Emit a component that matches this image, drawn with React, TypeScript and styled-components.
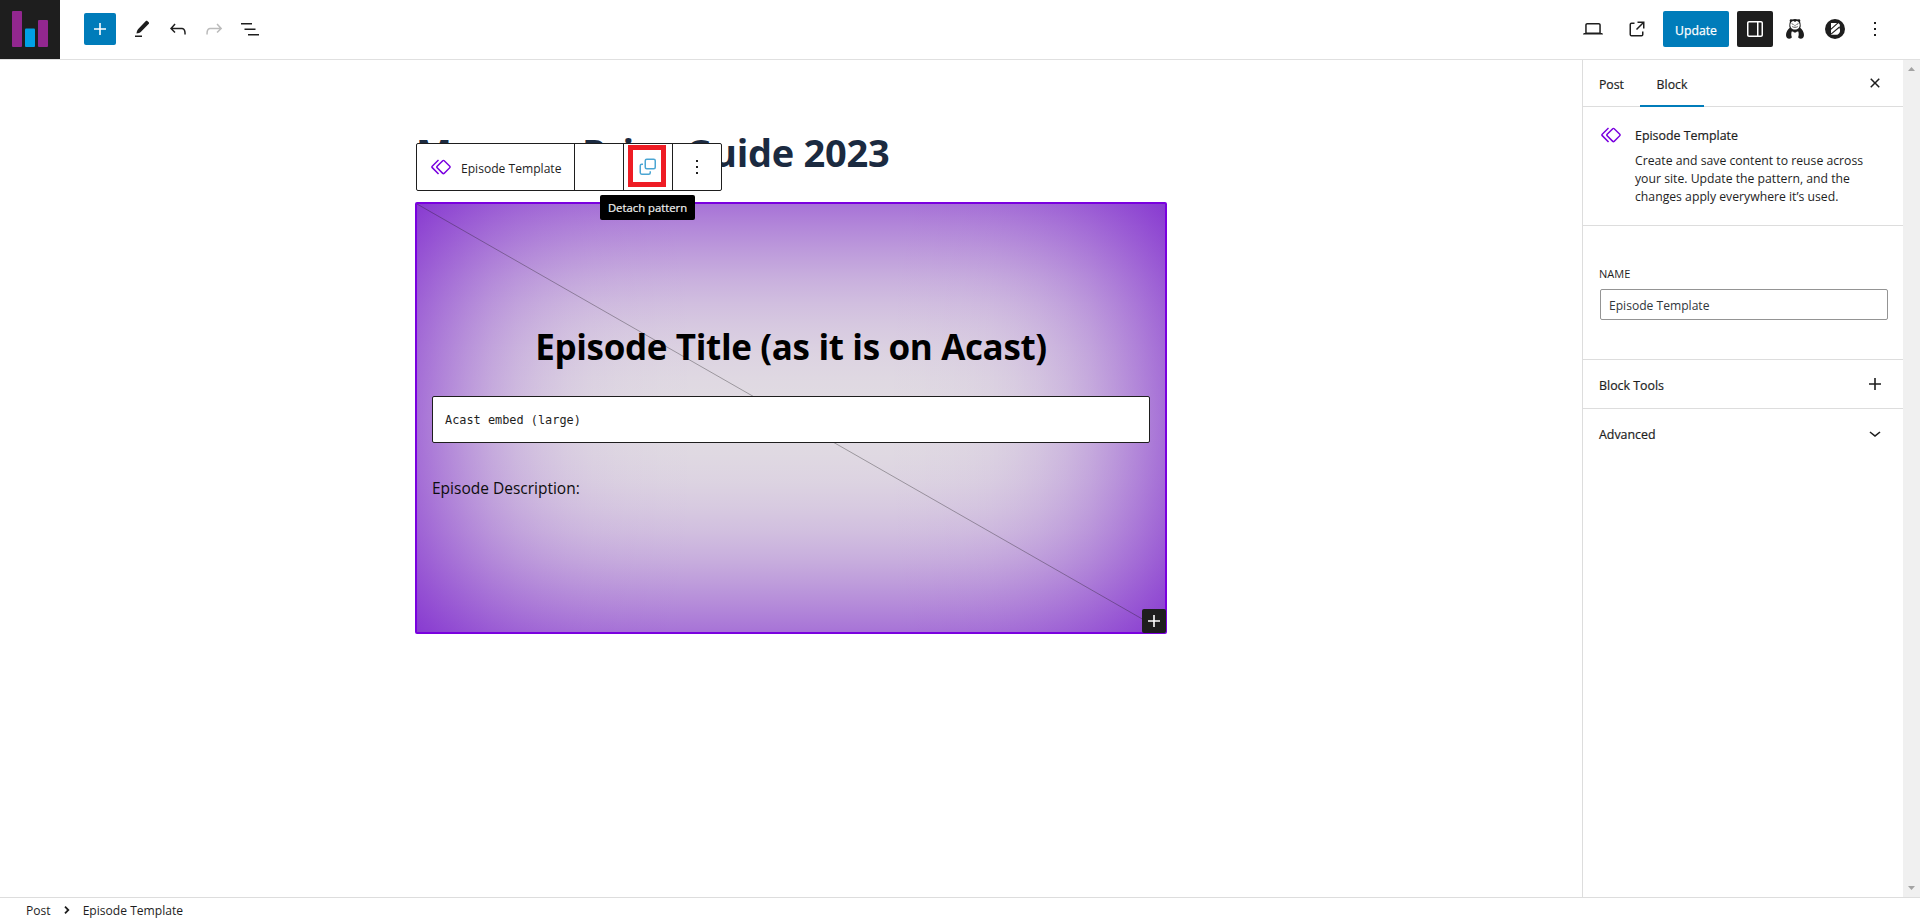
import React from "react";
import styled, { createGlobalStyle } from "styled-components";

const GlobalStyle = createGlobalStyle`
  * { box-sizing: border-box; }
  body {
    margin: 0;
    background: #fff;
    color: #1e1e1e;
    font-family: "Open Sans", "Noto Sans", sans-serif;
    font-size: 12.2px;
    overflow: hidden;
  }
  h1, h2, p { margin: 0; }
  button { font-family: inherit; border: 0; padding: 0; background: none; color: inherit; }
  svg { display: block; flex: none; }
`;

const Shell = styled.div`
  display: grid;
  grid-template-rows: 60px 1fr 22px;
  height: 919px;
`;

/* Header */
const Header = styled.header`
  display: flex;
  align-items: flex-start;
  justify-content: space-between;
  border-bottom: 1px solid #e0e0e0;
`;

const SiteLogo = styled.div`
  align-self: flex-start;
  width: 60px;
  height: 59px;
  background: #1e1e1e;
`;

const HeaderGroup = styled.div`
  display: flex;
  align-items: center;
  height: 58px;
`;

const InserterButton = styled.button`
  display: grid;
  place-items: center;
  width: 32px;
  height: 32px;
  margin: 0 8px 0 24px;
  border-radius: 2px;
  background: #007cba;
  color: #fff;
`;

const IconButton = styled.button<{
  $width?: number;
  $after?: number;
  $active?: boolean;
  $faded?: boolean;
}>`
  display: grid;
  place-items: center;
  width: ${(p) => p.$width ?? 36}px;
  height: 36px;
  margin-right: ${(p) => p.$after ?? 0}px;
  border-radius: 2px;
  background: ${(p) => (p.$active ? "#1e1e1e" : "transparent")};
  color: ${(p) => (p.$active ? "#fff" : p.$faded ? "#bbb" : "#1e1e1e")};
`;

const UpdateButton = styled.button`
  width: 66px;
  height: 36px;
  margin: 0 8px 0 0;
  padding-top: 2px;
  border-radius: 2px;
  background: #007cba;
  color: #fff;
  font-size: 12.2px;
  -webkit-text-stroke: 0.25px #fff;
`;

/* Body */
const Body = styled.div`
  display: grid;
  grid-template-columns: 1582px 321px 17px;
  min-height: 0;
`;

const Canvas = styled.main`
  display: flex;
  flex-direction: column;
  align-items: center;
  padding-top: 67px;
`;

const PostTitle = styled.h1`
  width: 750px;
  color: #1b2a40;
  font-size: 38px;
  line-height: 50px;
  font-weight: 700;
  letter-spacing: -0.28px;
  white-space: nowrap;
`;

/* Opacity falls off from each edge along a Gaussian curve. */
const glow = (a: number) => `rgba(104, 0, 202, ${a})`;

const horizontalFalloff: [number, number][] = [
  [0, 0.49], [25, 0.391], [50, 0.3], [75, 0.218], [100, 0.152], [125, 0.1],
  [150, 0.062], [175, 0.036], [200, 0.02], [250, 0.004], [300, 0],
];
const verticalFalloff: [number, number][] = [
  [0, 0.49], [25, 0.391], [50, 0.3], [75, 0.218], [100, 0.152], [125, 0.1],
  [150, 0.063], [175, 0.038], [195, 0.026], [214, 0.022],
];

const mirrored = (direction: string, falloff: [number, number][]) => {
  const near = falloff.map(([d, a]) => `${glow(a)} ${d}px`);
  const far = [...falloff].reverse().map(([d, a]) => `${glow(a)} calc(100% - ${d}px)`);
  return `linear-gradient(${direction}, ${[...near, ...far].join(", ")})`;
};

const PatternBlock = styled.section`
  position: relative;
  width: 752px;
  height: 432px;
  margin-top: 25px;
  padding: 118px 15px 0;
  border: 2px solid #7a00df;
  border-radius: 2px;
  background:
    ${mirrored("to right", horizontalFalloff)},
    ${mirrored("to bottom", verticalFalloff)},
    #e4e1e3;
  background-origin: padding-box;
  background-clip: padding-box;
`;

const Diagonal = styled.svg`
  position: absolute;
  inset: 0;
`;

const EpisodeHeading = styled.h2`
  position: relative;
  color: #000;
  font-size: 35px;
  line-height: 50px;
  font-weight: 700;
  letter-spacing: -0.35px;
  text-align: center;
`;

const EmbedField = styled.div`
  position: relative;
  height: 47px;
  margin-top: 24px;
  padding: 0 12px;
  border: 1px solid #1e1e1e;
  border-radius: 2px;
  background: #fff;
  font-family: "DejaVu Sans Mono", monospace;
  font-size: 11.88px;
  line-height: 47px;
`;

const Description = styled.p`
  position: relative;
  margin-top: 33px;
  color: #0d0d0d;
  font-size: 15.5px;
  line-height: 24px;
`;

const Appender = styled.button`
  position: absolute;
  right: -1px;
  bottom: -1px;
  display: grid;
  place-items: center;
  width: 24px;
  height: 24px;
  border-radius: 2px;
  background: #1e1e1e;
  color: #fff;
`;

const BlockToolbar = styled.div`
  position: absolute;
  left: -1px;
  top: -61px;
  display: flex;
  width: 306px;
  height: 48px;
  border: 1px solid #1e1e1e;
  border-radius: 2px;
  background: #fff;
`;

const ToolbarCell = styled.div<{ $width: number }>`
  display: flex;
  align-items: center;
  justify-content: center;
  width: ${(p) => p.$width}px;
  & + & { border-left: 1px solid #1e1e1e; }
`;

const BlockSwitcher = styled.div`
  display: flex;
  align-items: center;
  gap: 8px;
  width: 157px;
  padding-left: 12px;
  color: #7a00df;
  & + div { border-left: 1px solid #1e1e1e; }
`;

const SwitcherLabel = styled.span`
  padding-top: 2px;
  color: #1e1e1e;
  font-size: 12.1px;
  white-space: nowrap;
`;

const Highlight = styled.div`
  display: grid;
  place-items: center;
  width: 38px;
  height: 42px;
  margin: -2px 3px 0 0;
  padding: 2px 0 0 2px;
  border: 5px solid #ee1c24;
  color: #4ba6d3;
`;

const Tooltip = styled.div`
  position: absolute;
  left: 183px;
  top: -9px;
  width: 95px;
  height: 25px;
  border-radius: 2px;
  background: #000;
  color: #f0f0f0;
  font-size: 11.3px;
  line-height: 25px;
  text-align: center;
  -webkit-text-stroke: 0.2px #f0f0f0;
`;

/* Sidebar */
const Sidebar = styled.aside`
  border-left: 1px solid #ddd;
`;

const TabBar = styled.div`
  display: flex;
  height: 47px;
  border-bottom: 1px solid #ddd;
`;

const Tab = styled.button<{ $width: number; $active?: boolean }>`
  width: ${(p) => p.$width}px;
  height: 47px;
  padding-top: 3px;
  font-size: 12.3px;
  -webkit-text-stroke: 0.2px #1e1e1e;
  border-bottom: 2px solid ${(p) => (p.$active ? "#007cba" : "transparent")};
`;

const CloseSlot = styled.div`
  margin: 11px 16px 0 auto;
`;

const BlockCard = styled.div`
  display: flex;
  gap: 12px;
  height: 119px;
  padding: 16px 16px 0;
  border-bottom: 1px solid #ddd;
  color: #7a00df;
`;

const CardText = styled.div`
  padding-top: 1px;
  color: #1e1e1e;
`;

const CardTitle = styled.div`
  font-size: 12.4px;
  line-height: 24px;
  -webkit-text-stroke: 0.2px #1e1e1e;
`;

const CardDescription = styled.p`
  margin-top: 4px;
  line-height: 18px;
  font-size: 12.23px;
  white-space: nowrap;
`;

const NameSection = styled.div`
  height: 133px;
  padding: 40px 15px 0 16px;
`;

const FieldLabel = styled.div`
  font-size: 11px;
  line-height: 16px;
`;

const NameInput = styled.div`
  height: 31px;
  margin: 7px 0 0 1px;
  padding: 1px 8px 0;
  border: 1px solid #949494;
  border-radius: 2px;
  color: #32373c;
  font-size: 12.1px;
  line-height: 29px;
`;

const PanelRow = styled.div`
  display: flex;
  align-items: center;
  justify-content: space-between;
  height: 49px;
  padding: 0 16px;
  border-top: 1px solid #ddd;
`;

const PanelLabel = styled.span`
  padding-top: 3px;
  font-size: 12.4px;
  -webkit-text-stroke: 0.2px #1e1e1e;
`;

const ScrollTrack = styled.div`
  display: flex;
  flex-direction: column;
  align-items: center;
  justify-content: space-between;
  padding: 7px 0;
  background: #f0f0f0;
  color: #a3a3a3;
`;

/* Footer */
const Footer = styled.footer`
  display: flex;
  align-items: center;
  height: 22px;
  padding: 2px 0 0 26px;
  border-top: 1px solid #ddd;
  font-size: 12.1px;
  line-height: 16px;
`;

const Crumb = styled.span`
  padding-top: 2px;
`;

const CrumbArrow = styled.span`
  width: 32px;
  display: grid;
  place-items: center;
`;

const Icon = ({ d, size = 24 }: { d: string; size?: number }) => (
  <svg width={size} height={size} viewBox="0 0 24 24" fill="currentColor">
    <path d={d} />
  </svg>
);

const ICONS = {
  undo: "M18.3 11.7c-.6-.6-1.4-.9-2.3-.9H6.7l2.9-3.3-1.1-1-4.5 5L8.5 16l1-1-2.7-2.7H16c.5 0 .9.2 1.3.5 1 1 1 3.4 1 4.5v.3h1.5v-.2c0-1.5 0-4.3-1.5-5.7z",
  redo: "M15.6 6.5l-1.1 1 2.9 3.3H8c-.9 0-1.7.3-2.3.9-1.4 1.5-1.4 4.2-1.4 5.6v.2h1.5v-.3c0-1.1 0-3.5 1-4.5.3-.3.7-.5 1.3-.5h9.2L14.5 15l1.1 1.1 4.6-4.6-4.6-5z",
  list: "M3 6h11v1.5H3V6Zm3.5 5.5h11V13h-11v-1.5ZM21 17H10v1.5h11V17Z",
  laptop: "M20.5 16h-.7V8c0-1.1-.9-2-2-2H6.2c-1.1 0-2 .9-2 2v8h-.7c-.8 0-1.5.7-1.5 1.5h20c0-.8-.7-1.5-1.5-1.5zM5.7 8c0-.3.2-.5.5-.5h11.6c.3 0 .5.2.5.5v7.6H5.7V8z",
  external: "M19.5 4.5h-7V6h4.44l-5.97 5.97 1.06 1.06L18 7.06v4.44h1.5v-7Zm-13 1a2 2 0 0 0-2 2v10a2 2 0 0 0 2 2h10a2 2 0 0 0 2-2v-3H17v3a.5.5 0 0 1-.5.5h-10a.5.5 0 0 1-.5-.5v-10a.5.5 0 0 1 .5-.5h3V5.5h-3Z",
  drawer: "M18 4H6c-1.1 0-2 .9-2 2v12c0 1.1.9 2 2 2h12c1.1 0 2-.9 2-2V6c0-1.1-.9-2-2-2zm-4 14.5H6c-.3 0-.5-.2-.5-.5V6c0-.3.2-.5.5-.5h8v13zm4.5-.5c0 .3-.2.5-.5.5h-2.5v-13H18c.3 0 .5.2.5.5v12z",
  more: "M13 19h-2v-2h2v2zm0-6h-2v-2h2v2zm0-6h-2V5h2v2z",
  symbol: "M21.3 10.8l-5.6-5.6c-.7-.7-1.8-.7-2.5 0l-5.6 5.6c-.7.7-.7 1.8 0 2.5l5.6 5.6c.3.3.8.5 1.2.5s.9-.2 1.2-.5l5.6-5.6c.8-.7.8-1.9.1-2.5zm-1 1.4l-5.6 5.6c-.1.1-.3.1-.4 0l-5.6-5.6c-.1-.1-.1-.3 0-.4l5.6-5.6s.1-.1.2-.1.1 0 .2.1l5.6 5.6c.1.1.1.3 0 .4zm-16.6-.4L10 5.5l-1-1-6.3 6.3c-.7.7-.7 1.8 0 2.5L9 19.5l1.1-1.1-6.3-6.3c-.2 0-.2-.2-.1-.3z",
  plus: "M18 11.2h-5.2V6h-1.6v5.2H6v1.6h5.2V18h1.6v-5.2H18z",
  close: "M12 13.06l3.71 3.71 1.06-1.06L13.06 12l3.71-3.71-1.06-1.06L12 10.94 8.29 7.23 7.23 8.29 10.94 12l-3.71 3.71 1.06 1.06z",
  chevron: "M17.5 11.6L12 16l-5.5-4.4.9-1.2L12 14l4.5-3.6 1 1.2z",
};

const PencilIcon = () => (
  <svg width="24" height="24" viewBox="0 0 24 24" fill="currentColor">
    <path d="M18.5 4.9 17.6 4.2c-.6-.5-1.4-.4-2 .1L8.2 11.9c-1 1.2-1.5 2.7-1.7 4.6 1.9-.2 3.4-.7 4.5-1.7l7.6-7.7c.6-.6.6-1.6-.1-2.2Z" />
    <path d="M5 18.5h7V20H5z" />
  </svg>
);

const BarsLogo = () => (
  <svg width="60" height="59" viewBox="0 0 60 59">
    <rect x="12" y="11" width="10" height="36" rx="1" fill="#92278f" />
    <rect x="25" y="28.5" width="10" height="18.5" rx="1" fill="#00a0e6" />
    <rect x="38" y="20" width="10" height="27" rx="1" fill="#92278f" />
  </svg>
);

const BearIcon = () => (
  <svg width="20" height="20" viewBox="0 0 20 20">
    <path
      fill="#1e1e1e"
      d="M5 .8c.5-.6 1.4-.5 1.900-.2C8.700-.1 11.300-.1 13.100.6c.5-.3 1.400-.4 1.900.2.5.6.400 1.300 0 1.800.4 1.200.7 2.700.7 4.100 0 .8-.2 1.500-.5 2.100 2.200 1.600 3.800 4.500 3.800 7.200 0 2.100-1.300 3.700-3.300 3.700-1.200 0-2.200-.6-2.700-1.700H7c-.5 1.100-1.500 1.700-2.700 1.700-2 0-3.300-1.600-3.300-3.700 0-2.700 1.600-5.600 3.800-7.200-.3-.6-.5-1.300-.5-2.100 0-1.400.3-2.900.7-4.100-.4-.5-.5-1.200 0-1.800Z"
    />
    <path fill="#fff" d="M5.300 5.600C5.600 3.300 6.900 1.900 8.500 1.900L10 3l1.500-1.100c1.600 0 2.900 1.400 3.200 3.700.2 3-1.700 5-4.700 5s-4.900-2-4.700-5Z" />
    <path fill="none" stroke="#1e1e1e" strokeWidth=".7" d="m6.600 4.600 2 1M13.400 4.600l-2 1M10 5.800v1.400M7.200 7.600c1.800 1 3.800 1 5.600 0" />
    <path fill="#fff" d="M6.700 12.600c1-.4 1.900.1 2.300 1h2c.4-.9 1.300-1.400 2.300-1 .6 1.700.6 4.200-.3 6V20H7v-1.400c-.9-1.800-.9-4.300-.3-6Z" />
  </svg>
);

const SlashedBIcon = () => (
  <svg width="20" height="20" viewBox="0 0 20 20">
    <circle cx="10" cy="10" r="10" fill="#1e1e1e" />
    <path fill="#fff" d="M6 4h6.200c2.600 0 3.500 2.500 2 4.700 1.900 2.700.6 7.100-3.100 7.100H6z" />
    <path stroke="#1e1e1e" strokeWidth="1.100" d="m5.500 10.600 7.500-6.800M6 15.200l8.500-7.200" />
  </svg>
);

const DetachIcon = () => (
  <svg width="18" height="18" viewBox="0 0 18 18" fill="none" stroke="currentColor" strokeWidth="1.5">
    <rect x="6.25" y="1.25" width="10" height="9.5" rx="1.5" />
    <path d="M4 6.250H2.700c-.8 0-1.450.6-1.450 1.400v6.900c0 .9.6 1.700 1.500 1.700h7c.8 0 1.500-.7 1.500-1.500v-1.500" />
  </svg>
);

const ScrollArrow = ({ down }: { down?: boolean }) => (
  <svg width="7" height="4" viewBox="0 0 7 4" fill="currentColor">
    <path d={down ? "M0 0h7L3.5 4z" : "M0 4h7L3.5 0z"} />
  </svg>
);

export default function App() {
  return (
    <>
      <GlobalStyle />
      <Shell>
        <Header>
          <HeaderGroup>
            <SiteLogo>
              <BarsLogo />
            </SiteLogo>
            <InserterButton aria-label="Add block">
              <Icon d={ICONS.plus} />
            </InserterButton>
            <IconButton aria-label="Tools"><PencilIcon /></IconButton>
            <IconButton aria-label="Undo"><Icon d={ICONS.undo} /></IconButton>
            <IconButton aria-label="Redo" $faded><Icon d={ICONS.redo} /></IconButton>
            <IconButton aria-label="Document overview"><Icon d={ICONS.list} /></IconButton>
          </HeaderGroup>
          <HeaderGroup>
            <IconButton aria-label="Preview" $width={44}><Icon d={ICONS.laptop} /></IconButton>
            <IconButton aria-label="View post" $width={44} $after={4}><Icon d={ICONS.external} /></IconButton>
            <UpdateButton>Update</UpdateButton>
            <IconButton aria-label="Settings" $active><Icon d={ICONS.drawer} /></IconButton>
            <IconButton aria-label="Bear plugin" $width={43}><BearIcon /></IconButton>
            <IconButton aria-label="B plugin" $width={38}><SlashedBIcon /></IconButton>
            <IconButton aria-label="Options" $width={42} $after={24}>
              <Icon d={ICONS.more} />
            </IconButton>
          </HeaderGroup>
        </Header>

        <Body>
          <Canvas>
            <PostTitle>Memory Price Guide 2023</PostTitle>
            <PatternBlock>
              <Diagonal width="748" height="428" viewBox="0 0 748 428">
                <path d="M0 0 748 428" stroke="#1e1e1e" strokeOpacity="0.35" />
              </Diagonal>
              <EpisodeHeading>Episode Title (as it is on Acast)</EpisodeHeading>
              <EmbedField>Acast embed (large)</EmbedField>
              <Description>Episode Description:</Description>
              <Appender aria-label="Add block">
                <Icon d={ICONS.plus} />
              </Appender>
              <BlockToolbar>
                <BlockSwitcher>
                  <Icon d={ICONS.symbol} />
                  <SwitcherLabel>Episode Template</SwitcherLabel>
                </BlockSwitcher>
                <ToolbarCell $width={49} />
                <ToolbarCell $width={49}>
                  <Highlight>
                    <DetachIcon />
                  </Highlight>
                </ToolbarCell>
                <ToolbarCell $width={49}>
                  <Icon d={ICONS.more} />
                </ToolbarCell>
              </BlockToolbar>
              <Tooltip>Detach pattern</Tooltip>
            </PatternBlock>
          </Canvas>

          <Sidebar>
            <TabBar>
              <Tab $width={57}>Post</Tab>
              <Tab $width={64} $active>Block</Tab>
              <CloseSlot>
                <Icon d={ICONS.close} />
              </CloseSlot>
            </TabBar>
            <BlockCard>
              <Icon d={ICONS.symbol} />
              <CardText>
                <CardTitle>Episode Template</CardTitle>
                <CardDescription>
                  Create and save content to reuse across
                  <br />
                  your site. Update the pattern, and the
                  <br />
                  changes apply everywhere it’s used.
                </CardDescription>
              </CardText>
            </BlockCard>
            <NameSection>
              <FieldLabel>NAME</FieldLabel>
              <NameInput>Episode Template</NameInput>
            </NameSection>
            <PanelRow>
              <PanelLabel>Block Tools</PanelLabel>
              <Icon d={ICONS.plus} />
            </PanelRow>
            <PanelRow>
              <PanelLabel>Advanced</PanelLabel>
              <Icon d={ICONS.chevron} />
            </PanelRow>
          </Sidebar>

          <ScrollTrack>
            <ScrollArrow />
            <ScrollArrow down />
          </ScrollTrack>
        </Body>

        <Footer>
          <Crumb>Post</Crumb>
          <CrumbArrow>
            <svg width="6" height="8" viewBox="0 0 6 8" fill="none" stroke="#1e1e1e" strokeWidth="1.8">
              <path d="M1 .7 4.3 4 1 7.3" />
            </svg>
          </CrumbArrow>
          <Crumb>Episode Template</Crumb>
        </Footer>
      </Shell>
    </>
  );
}
